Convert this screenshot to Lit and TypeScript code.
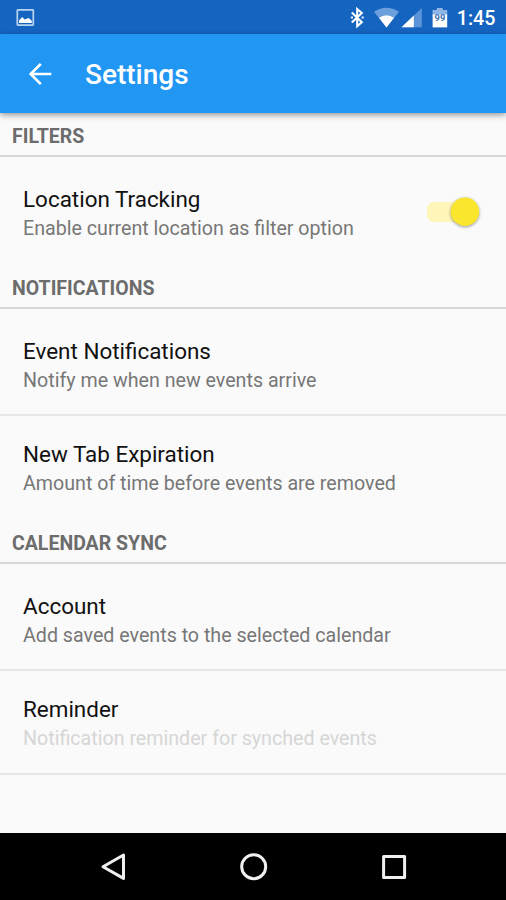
import { LitElement, html, css, nothing } from "lit";
import { customElement, property } from "lit/decorators.js";

@customElement("status-bar")
class StatusBar extends LitElement {
  static styles = css`
    :host { display: flex; height: 34px; background: #1564c0; color: #fff; box-sizing: border-box; }
    svg { display: block; }
    .bar { display: flex; width: 100%; }
    .icons { margin-left: auto; }
    .clock { font: 500 19.7px/37px Roboto, sans-serif; margin: 0 10.5px 0 8.5px; white-space: nowrap; }
  `;
  render() {
    return html`<div class="bar">
      <svg width="50" height="34" viewBox="0 0 50 34">
        <rect x="17.3" y="9.8" width="16" height="15.4" rx="0.6" fill="none" stroke="#b9d3f2" stroke-width="1.7" />
        <path d="M19 23V20.5L22.2 17L24.6 19.6L28.6 18L31.8 20.8V23Z" fill="#fff" />
      </svg>
      <svg class="icons" width="102" height="34" viewBox="346 0 102 34">
        <path d="M351.8 12.6L361.8 22.2L357.2 26.2V9L361.8 13L351.8 22.6" fill="none" stroke="#fff" stroke-width="2.1" />
        <path d="M350.8 17.5h2.2M361.6 17.5h2.2" stroke="#e4eefa" stroke-width="2.2" />
        <path d="M374 11.8Q386.5 3.6 399 11.8L386.5 27.6Z" fill="#6ba0dd" />
        <path d="M379 17.8Q386.5 12.6 394 17.8L386.5 27.5Z" fill="#fff" />
        <path d="M401.5 27.3L421.8 8V27.3Z" fill="#5b94d8" />
        <path d="M401.5 27.3L413.8 15.6V27.3Z" fill="#fff" />
        <path d="M436.8 8h6v2h4.4v5.4h-14.6V10h4.2Z" fill="#8db5e5" />
        <path d="M432.6 14.5h14.6v12.9h-14.6Z" fill="#fff" />
        <text x="439.9" y="21.2" text-anchor="middle" font-family="Roboto, sans-serif" font-weight="700" font-size="9.4" fill="#3e73b6">99</text>
      </svg>
      <span class="clock">1:45</span>
    </div>`;
  }
}

@customElement("app-bar")
class AppBar extends LitElement {
  static styles = css`
    :host { display: flex; align-items: center; height: 79px; background: #2196f3; color: #fff; box-shadow: 0 2px 6px rgba(0, 0, 0, 0.4); position: relative; }
    svg { display: block; margin-left: 27px; }
    .title { font: 500 28px/36px Roboto, sans-serif; margin-left: 32px; padding-top: 2px; }
  `;
  render() {
    return html`<svg width="26" height="26" viewBox="0 0 26 26">
        <path d="M24.3 13H3.6M13.8 2.9L3.7 13L13.8 23.1" fill="none" stroke="#fff" stroke-width="2.7" />
      </svg>
      <span class="title">Settings</span>`;
  }
}

@customElement("setting-row")
class SettingRow extends LitElement {
  @property() label = "";
  @property() summary = "";
  @property({ type: Boolean }) toggle = false;
  @property({ type: Boolean }) disabled = false;
  static styles = css`
    :host { display: flex; justify-content: space-between; box-sizing: border-box; padding: 24px 23px 0 23px; height: 104px; font-family: Roboto, sans-serif; }
    :host([lead]) { padding-top: 28px; height: 107px; }
    :host([lead][single]) { height: 108px; }
    :host([ruled]) { border-bottom: 2px solid #e7e7e7; }
    .label { font-size: 22.45px; line-height: 28px; color: #111; white-space: nowrap; }
    .summary { font-size: 19.65px; line-height: 28px; margin-top: 2px; color: #777; white-space: nowrap; }
    .dim { color: #d6d6d6; }
    svg { display: block; margin-top: 8px; overflow: visible; }
    .thumb { filter: drop-shadow(0 1.5px 1.5px rgba(0, 0, 0, 0.4)); }
  `;
  render() {
    return html`<div>
        <div class="label">${this.label}</div>
        <div class="summary ${this.disabled ? "dim" : ""}">${this.summary}</div>
      </div>
      ${this.toggle
        ? html`<svg width="56" height="38" viewBox="0 0 56 38">
            <rect x="0" y="9" width="48" height="20" rx="7" fill="#fef5b8" />
            <circle class="thumb" cx="38" cy="18.7" r="14.2" fill="#fbe62e" />
          </svg>`
        : nothing}`;
  }
}

interface Row {
  label: string;
  summary: string;
  toggle?: boolean;
  ruled?: boolean;
  disabled?: boolean;
}

@customElement("app-root")
class AppRoot extends LitElement {
  static styles = css`
    :host { display: flex; flex-direction: column; height: 900px; background: #fafafa; overflow: hidden; }
    .content { flex: 1; }
    .heading { box-sizing: border-box; height: 44px; padding: 10px 12px 0; border-bottom: 2px solid #d8d8d8; font: 700 19.5px/28px Roboto, sans-serif; color: #6c6c6c; }
    .nav { height: 67px; background: #000; }
    .nav svg { display: block; }
  `;
  sections: { name: string; rows: Row[] }[] = [
    { name: "FILTERS", rows: [{ label: "Location Tracking", summary: "Enable current location as filter option", toggle: true }] },
    { name: "NOTIFICATIONS", rows: [
      { label: "Event Notifications", summary: "Notify me when new events arrive", ruled: true },
      { label: "New Tab Expiration", summary: "Amount of time before events are removed" },
    ] },
    { name: "CALENDAR SYNC", rows: [
      { label: "Account", summary: "Add saved events to the selected calendar", ruled: true },
      { label: "Reminder", summary: "Notification reminder for synched events", ruled: true, disabled: true },
    ] },
  ];
  render() {
    return html`<status-bar></status-bar>
      <app-bar></app-bar>
      <div class="content">
        ${this.sections.map((s) => html`<div class="heading">${s.name}</div>
          ${s.rows.map((r, i) => html`<setting-row
            .label=${r.label} .summary=${r.summary} .toggle=${!!r.toggle} .disabled=${!!r.disabled}
            ?lead=${i === 0} ?single=${s.rows.length === 1} ?ruled=${r.ruled}
          ></setting-row>`)}`)}
      </div>
      <div class="nav">
        <svg width="506" height="67" viewBox="0 833 506 67" fill="none" stroke="#f0f0f0" stroke-width="3" stroke-linejoin="round">
          <path d="M123.5 855V878.4L103 866.7Z" />
          <circle cx="253.7" cy="866.7" r="12" />
          <rect x="383.6" y="856.4" width="21" height="21" />
        </svg>
      </div>`;
  }
}
